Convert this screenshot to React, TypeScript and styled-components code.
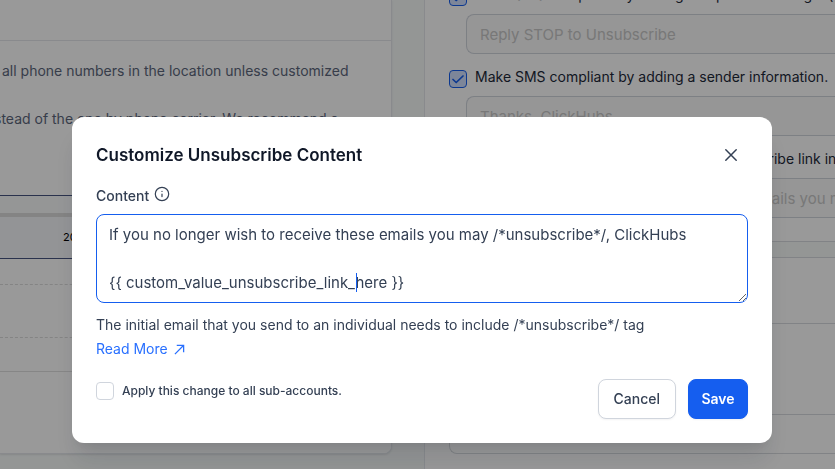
import React from "react";
import styled, { createGlobalStyle } from "styled-components";

const GlobalStyle = createGlobalStyle`
  *, *::before, *::after { box-sizing: border-box; }
  html, body, #root { height: 100%; }
  body {
    margin: 0;
    overflow: hidden;
    background: #f7faf9;
    color: #344054;
    font-family: Inter, "Liberation Sans", sans-serif;
    font-size: 14px;
    line-height: 24px;
  }
  button, input, textarea { font: inherit; color: inherit; }
  p, h2 { margin: 0; }
`;

const Page = styled.main`
  display: grid;
  grid-template-columns: minmax(0, 392fr) minmax(0, 411fr);
  gap: 32px;
  height: 100%;
  overflow: hidden;
`;

const NumbersCard = styled.section`
  align-self: start;
  background: #fff;
  border: 1px solid #e4e7ec;
  border-width: 0 1px 1px 0;
  border-radius: 0 0 8px 0;
  box-shadow: 0 1px 2px rgba(16, 24, 40, 0.1);
  white-space: nowrap;
  overflow: hidden;
`;

const SettingsPanel = styled.section`
  min-width: 0;
  padding-left: 24px;
  background: #fff;
  border-left: 1px solid #e4e7ec;
  white-space: nowrap;
`;

const CardHeader = styled.div`
  height: 41px;
  border-bottom: 1px solid #e4e7ec;
`;

const Notice = styled.div`
  display: flex;
  flex-direction: column;
  gap: 24px;
  height: 153px;
  padding-top: 18px;
  color: #5d677c;
`;

const NoticeLine = styled.p<{ $outdent?: boolean }>`
  margin-left: ${(p) => (p.$outdent ? -6 : 2)}px;
`;

const UsageTable = styled.table`
  width: 100%;
  border-collapse: collapse;
  color: #000;
  font-size: 11px;
  td { padding: 0 0 0 63px; }
`;

const UsageRow = styled.tr<{ $height: number; $line: string; $fill?: string }>`
  height: ${(p) => p.$height}px;
  border-bottom: ${(p) => p.$line};
  background: ${(p) => p.$fill ?? "#fff"};
`;

const Compliance = styled.div`
  display: flex;
  flex-direction: column;
  height: 270px;
  margin-top: -28px;
  border-bottom: 1px solid #d8dbdf;
`;

const Option = styled.label`
  display: flex;
  flex: none;
  align-items: center;
  gap: 8px;
  height: 42px;
  padding-top: 4px;
  color: #1d2939;
`;

const Tick = styled.input`
  appearance: none;
  flex: none;
  width: 18px;
  height: 18px;
  margin: 0;
  border: 1px solid #d0d5dd;
  border-radius: 4px;
  background: #fff;
  &:checked {
    margin-top: 4px;
    border-color: #155eef;
    background: #d1e0ff
      url("data:image/svg+xml,%3Csvg xmlns='http://www.w3.org/2000/svg' viewBox='0 0 16 16'%3E%3Cpath d='M3 8.5L6.2 11.5L13 5' fill='none' stroke='%23155eef' stroke-width='1.7' stroke-linecap='round' stroke-linejoin='round'/%3E%3C/svg%3E")
      center / 16px 16px no-repeat;
  }
`;

const Field = styled.input`
  flex: none;
  height: 40px;
  margin-left: 17px;
  padding: 0 0 0 13px;
  border: 1px solid #d0d5dd;
  border-right: 0;
  border-radius: 8px 0 0 8px;
  background: #fafafa;
  font-size: 15px;
  &::placeholder { color: #c8c8c8; opacity: 1; }
`;

const Band = styled.div`
  height: 15px;
  background: #f7faf9;
`;

const Summary = styled.div`
  border: 1px solid #d8dbdf;
  border-right: 0;
  border-radius: 0 0 0 8px;
`;

const SummaryRow = styled.div<{ $height: number }>`
  height: ${(p) => p.$height}px;
  &:not(:last-child) { border-bottom: 1px solid #d8dbdf; }
`;

const Overlay = styled.div`
  position: fixed;
  inset: 0;
  padding: 117px 63px 0 72px;
  background: rgba(0, 0, 0, 0.4);
`;

const Dialog = styled.form`
  padding: 24px;
  border-radius: 12px;
  background: #fff;
  box-shadow: 0 20px 24px -4px rgba(16, 24, 40, 0.12), 0 8px 8px -4px rgba(16, 24, 40, 0.06);
`;

const DialogHeader = styled.header`
  display: flex;
  justify-content: space-between;
  align-items: center;
  height: 28px;
`;

const Title = styled.h2`
  color: #101828;
  font-size: 17px;
  font-weight: 600;
  line-height: 28px;
`;

const CloseButton = styled.button`
  display: flex;
  padding: 6px;
  border: 0;
  background: none;
`;

const LabelRow = styled.div`
  display: flex;
  align-items: center;
  gap: 5px;
  height: 22px;
  margin-top: 16px;
  font-weight: 500;
  svg { margin-bottom: 4px; }
`;

const Editor = styled.div`
  position: relative;
  display: flex;
  margin-top: 7px;
`;

const ContentBox = styled.textarea`
  flex: 1;
  min-width: 0;
  height: 89px;
  padding: 8px 12px;
  border: 1px solid #155eef;
  border-radius: 8px;
  outline: 0;
  font-size: 15px;
  line-height: 24px;
  overflow: hidden;
`;

const Caret = styled.span`
  position: absolute;
  left: 260px;
  top: 59px;
  width: 1px;
  height: 19px;
  background: #155eef;
`;

const Hint = styled.p`
  margin-top: 10px;
`;

const MoreLink = styled.a`
  display: inline-flex;
  align-items: center;
  gap: 6px;
  color: #2970ff;
  text-decoration: none;
`;

const DialogFooter = styled.footer`
  display: flex;
  justify-content: space-between;
  margin-top: 18px;
`;

const ApplyAll = styled.label`
  display: flex;
  align-items: center;
  gap: 8px;
  height: 24px;
  font-size: 12px;
  font-weight: 500;
`;

const Actions = styled.div`
  display: flex;
  gap: 12px;
`;

const ActionButton = styled.button<{ $primary?: boolean }>`
  min-width: 60px;
  height: 40px;
  padding: 0 ${(p) => (p.$primary ? 12 : 15)}px;
  border: 1px solid ${(p) => (p.$primary ? "#155eef" : "#d0d5dd")};
  border-radius: 8px;
  background: ${(p) => (p.$primary ? "#155eef" : "#fff")};
  color: ${(p) => (p.$primary ? "#fff" : "#344054")};
  font-weight: ${(p) => (p.$primary ? 600 : 500)};
  box-shadow: 0 1px 2px rgba(16, 24, 40, 0.05);
`;

const CloseIcon = () => (
  <svg width="22" height="22" viewBox="0 0 22 22" fill="none" stroke="#344054" strokeWidth="1.5" strokeLinecap="round">
    <path d="M5.8 5.8l10.4 10.4M16.2 5.8L5.8 16.2" />
  </svg>
);

const InfoIcon = () => (
  <svg width="16" height="16" viewBox="0 0 16 16" fill="none" stroke="#344054" strokeWidth="1.2" strokeLinecap="round">
    <circle cx="8" cy="8" r="6.7" />
    <path d="M8 8v2.6M8 5.4v.1" />
  </svg>
);

const ArrowIcon = () => (
  <svg width="11" height="11" viewBox="0 0 12 12" fill="none" stroke="currentColor" strokeWidth="1.4">
    <path d="M1 11L10.3 1.7M3 1.5h7.5V9" />
  </svg>
);

const message =
  "If you no longer wish to receive these emails you may /*unsubscribe*/, ClickHubs\n\n{{ custom_value_unsubscribe_link_here }}";

const complianceOptions = [
  { label: "Make SMS compliant by adding an opt-out message. (", field: "Opt-out message", placeholder: "Reply STOP to Unsubscribe" },
  { label: "Make SMS compliant by adding a sender information.", field: "Sender information", placeholder: "Thanks, ClickHubs" },
  {
    label: "Make Email compliant by adding an unsubscribe link in",
    field: "Unsubscribe message",
    placeholder: "If you no longer wish to receive these emails you may",
  },
];

export default function App() {
  return (
    <>
      <GlobalStyle />
      <Page>
        <NumbersCard>
          <CardHeader />
          <Notice>
            <NoticeLine>all phone numbers in the location unless customized</NoticeLine>
            <NoticeLine $outdent>stead of the one by phone carrier. We recommend a</NoticeLine>
          </Notice>
          <UsageTable>
            <tbody>
              <UsageRow $height={1} $line="1px solid #475480"><td /></UsageRow>
              <UsageRow $height={20} $line="4px solid #dcdcdc" $fill="#f9fafb"><td /></UsageRow>
              <UsageRow $height={43} $line="1px solid #475480" $fill="#f5f7fa"><td>2024</td></UsageRow>
              <UsageRow $height={26} $line="1px dashed #dcdcdc"><td /></UsageRow>
              <UsageRow $height={53} $line="1px dashed #dcdcdc"><td /></UsageRow>
              <UsageRow $height={34} $line="1px solid #e0e0e0"><td /></UsageRow>
              <UsageRow $height={82} $line="0"><td /></UsageRow>
            </tbody>
          </UsageTable>
        </NumbersCard>
        <SettingsPanel>
          <Compliance>
            {complianceOptions.map((option) => (
              <React.Fragment key={option.field}>
                <Option>
                  <Tick type="checkbox" defaultChecked />
                  {option.label}
                </Option>
                <Field aria-label={option.field} placeholder={option.placeholder} />
              </React.Fragment>
            ))}
          </Compliance>
          <Band />
          <Summary>
            <SummaryRow $height={66} />
            <SummaryRow $height={91} />
            <SummaryRow $height={38} />
          </Summary>
        </SettingsPanel>
      </Page>
      <Overlay>
        <Dialog role="dialog" aria-labelledby="dialog-title" onSubmit={(e) => e.preventDefault()}>
          <DialogHeader>
            <Title id="dialog-title">Customize Unsubscribe Content</Title>
            <CloseButton type="button" aria-label="Close"><CloseIcon /></CloseButton>
          </DialogHeader>
          <LabelRow>
            <label htmlFor="content">Content</label>
            <InfoIcon />
          </LabelRow>
          <Editor>
            <ContentBox id="content" defaultValue={message} />
            <Caret />
          </Editor>
          <Hint>The initial email that you send to an individual needs to include /*unsubscribe*/ tag</Hint>
          <MoreLink href="#">Read More <ArrowIcon /></MoreLink>
          <DialogFooter>
            <ApplyAll>
              <Tick type="checkbox" />
              Apply this change to all sub-accounts.
            </ApplyAll>
            <Actions>
              <ActionButton type="button">Cancel</ActionButton>
              <ActionButton type="submit" $primary>Save</ActionButton>
            </Actions>
          </DialogFooter>
        </Dialog>
      </Overlay>
    </>
  );
}
